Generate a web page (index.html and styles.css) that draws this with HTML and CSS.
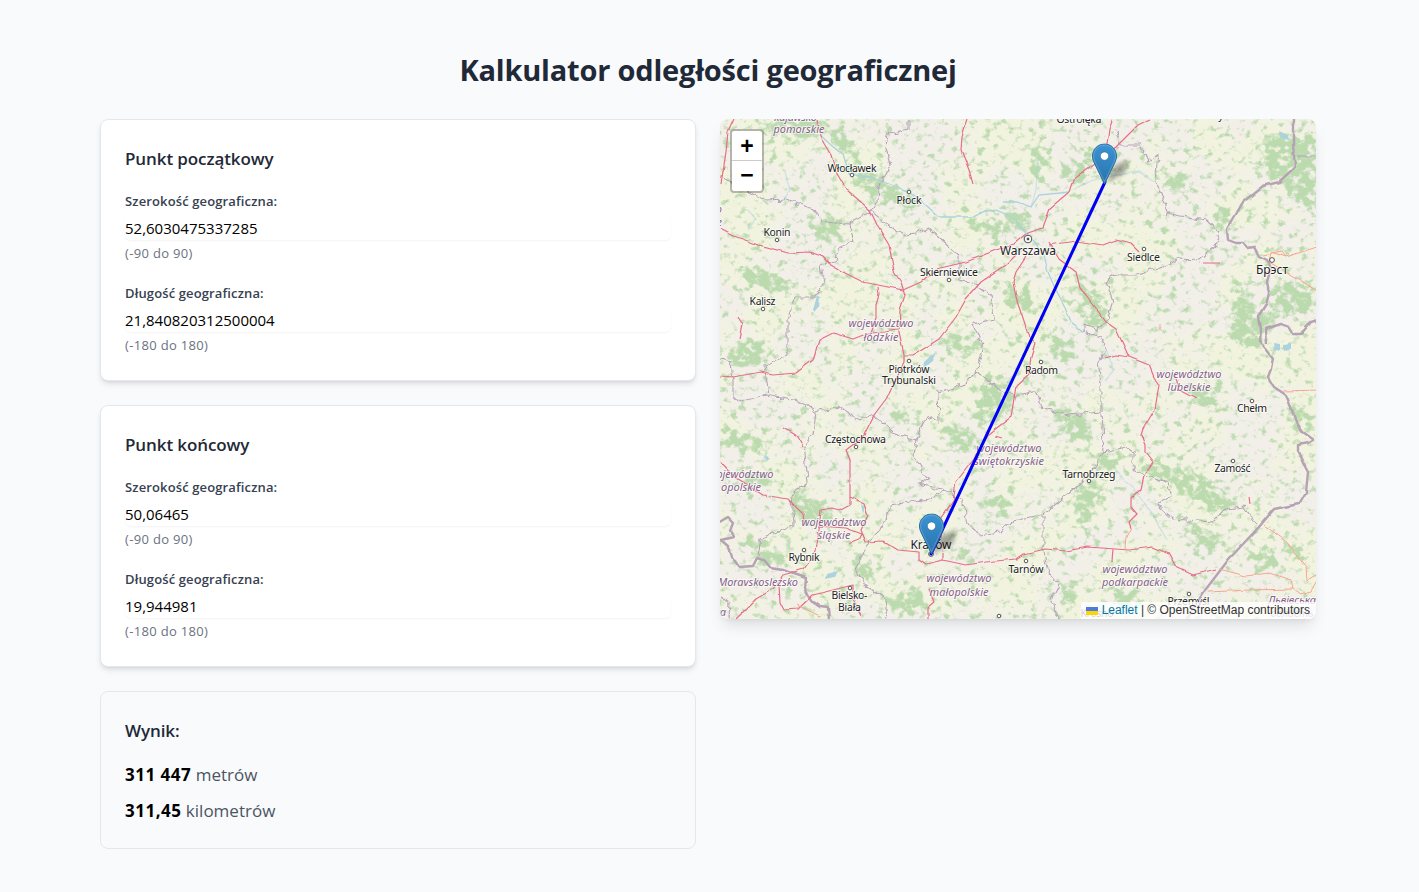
FILE: index.html
```html
<!DOCTYPE html>
<html lang="pl">
<head>
<meta charset="utf-8">
<title>Kalkulator odległości geograficznej</title>
<link rel="stylesheet" href="styles.css">
</head>
<body>
<main class="page">
  <h1 class="title"><span>Kalkulator odległości geograficznej</span></h1>
  <div class="columns">
    <div class="stack">
      <section class="card">
        <h2 class="card-title">Punkt początkowy</h2>
        <div class="field"><label class="label">Szerokość geograficzna:</label><div class="input">52,6030475337285</div><p class="hint">(-90 do 90)</p></div>
        <div class="field"><label class="label">Długość geograficzna:</label><div class="input">21,840820312500004</div><p class="hint">(-180 do 180)</p></div>
      </section>
      <section class="card">
        <h2 class="card-title">Punkt końcowy</h2>
        <div class="field"><label class="label">Szerokość geograficzna:</label><div class="input">50,06465</div><p class="hint">(-90 do 90)</p></div>
        <div class="field"><label class="label">Długość geograficzna:</label><div class="input">19,944981</div><p class="hint">(-180 do 180)</p></div>
      </section>
      <section class="card card-result">
        <h2 class="card-title">Wynik:</h2>
        <p class="result"><strong>311 447</strong> metrów</p>
        <p class="result"><strong>311,45</strong> kilometrów</p>
      </section>
    </div>
    <div class="map">
      <svg class="tiles" viewBox="720 119 596 500" width="596" height="500">
        <defs>
          <filter id="woods" filterUnits="userSpaceOnUse" x="720" y="119" width="596" height="500" color-interpolation-filters="sRGB">
            <feGaussianBlur in="SourceAlpha" stdDeviation="3.5" result="b"/>
            <feTurbulence type="fractalNoise" baseFrequency=".13 .15" numOctaves="5" seed="7"/>
            <feColorMatrix values="0 0 0 0 0  0 0 0 0 0  0 0 0 0 0  .8 .35 0 0 -.07" result="n"/>
            <feComposite in="n" in2="b" operator="arithmetic" k2="1" k3=".24"/>
            <feComponentTransfer result="m"><feFuncA type="linear" slope="5.5" intercept="-3.05"/></feComponentTransfer>
            <feFlood flood-color="#bbdaae"/>
            <feComposite in2="m" operator="in"/>
          </filter>
          <filter id="fields" filterUnits="userSpaceOnUse" x="720" y="119" width="596" height="500" color-interpolation-filters="sRGB">
            <feTurbulence type="fractalNoise" baseFrequency=".018" numOctaves="5" seed="21"/>
            <feColorMatrix values="0 0 0 0 .948  0 0 0 0 .953  0 0 0 0 .875  4 0 0 0 -1.5"/>
          </filter>
          <filter id="rough" filterUnits="userSpaceOnUse" x="700" y="100" width="640" height="540">
            <feTurbulence type="fractalNoise" baseFrequency=".13" numOctaves="2" seed="4"/>
            <feDisplacementMap in="SourceGraphic" scale="8" xChannelSelector="R" yChannelSelector="G"/>
          </filter>
          <filter id="bend" filterUnits="userSpaceOnUse" x="700" y="100" width="640" height="540">
            <feTurbulence type="fractalNoise" baseFrequency=".08" numOctaves="1" seed="9"/>
            <feDisplacementMap in="SourceGraphic" scale="4" xChannelSelector="R" yChannelSelector="G"/>
          </filter>
          <filter id="soft" x="-30%" y="-30%" width="160%" height="160%"><feGaussianBlur stdDeviation="2.2"/></filter>
          <linearGradient id="pin" x1="0" y1="0" x2="0" y2="1"><stop offset="0" stop-color="#3c93d3"/><stop offset="1" stop-color="#2873ad"/></linearGradient>
          <symbol id="marker" viewBox="0 0 25 41" width="25" height="41">
            <path d="M12.5.5C5.9.5.5 5.9.5 12.5c0 2.7.8 4.9 1.9 7.2L12.5 40.500l10.1-20.800c1.100-2.300 1.900-4.500 1.900-7.200C24.500 5.900 19.100.5 12.500.5z" fill="url(#pin)" stroke="#2a6d9f"/>
            <path d="M12.5 1.6C6.5 1.6 1.6 6.5 1.6 12.5c0 2.5.8 4.6 1.8 6.7L12.5 38l9.1-18.8c1-2.1 1.8-4.2 1.8-6.7 0-6-4.9-10.900-10.900-10.900z" fill="none" stroke="#fff" stroke-opacity=".2"/>
            <circle cx="12.5" cy="12.600" r="4.200" fill="#fff" stroke="#2d73a8" stroke-width=".7"/>
          </symbol>
        </defs>
        <rect x="720" y="119" width="596" height="500" fill="#f2efe9"/>
        <rect x="720" y="119" width="596" height="500" filter="url(#fields)"/>
        <g filter="url(#woods)">
          <path d="M1264 137L1316 132V212L1296 204 1283 182 1259 172zM1216 207h12l3 22h-18zM850 168l25 8 40 22 6 14-38-12-32-18zM828 127l18 6 14 24-14 2zM762 119h50l28 12-40 8-34-8zM962 218l50 4 4 12-40-2zM1000 205l28 8 4 18-22-6zM1062 166h26l-4 18-20-2zM1083 152l14-4-4 20-10-2zM738 265l34 8 28 14-32 4-26-10zM722 352l34-12 18 14-34 18zM722 430l48 10-8 12-40-6zM940 335l36 4 4 14-32-2zM885 405l34 10-10 8-20-6zM980 380l24-4 12 28-20 20-22-6zM938 425l32 4 14 24-28-4zM1090 450l32 6-4 18-20-6zM1136 460l36 6 34 12 34 28-22 6-32-16-44-26zM1080 486l22-6-2 24-20 26-8-24zM1178 522l28 8 26 18-30 2zM1244 546l28 8 16 20-30-6zM1278 536l30 18-4 10-20-12zM1188 385l36 5-10 18-24-6zM1237 280l16 24 24 10-18 36-30-10zM1268 282h40l8 30-40 2zM1288 400l22 14-2 18-16-6zM1072 270l30 28 8 22-22 10zM1046 330l22 10 4 22-22-6zM1046 402l40 12 8 28-30-4zM788 490l20 4 30 24-30 6-16-8zM745 470l28 6-4 12-28-4zM956 551l20-1-2 12-20-2zM880 598l40-10 8 28-34-4zM740 540l24 2 30 20-30 4zM854 552l16 12 8 20-24-10zM1120 585l26 10-16 14-20-12zM1056 582l24 6-12 18zM984 495l28 6-6 16-24-8zM808 225l30-10 6 24-24 4zM1030 135l16 20-4 34-8-10zM1160 175l24 0 10 18-20 0zM1000 285l30 6 10 24-30-6z"/>
        </g>
        <g class="water" filter="url(#bend)">
          <path d="M819 134L831 145 843 155 849 174 869 177 890 184 909 192 926 206 938 217 973 217 985 211 996 210 1003 213 1016 219 1028 235 1044 255 1048 272 1054 286 1066 309 1071 322 1084 332M1003 202L1018 202 1031 207 1039 195 1069 192"/>
          <path d="M1069 192L1093 180 1116 175 1140 172 1156 182M1031 207L1036 189 1038 159M1115 470L1135 490 1152 513 1167 540M785 172L790 190 783 202M748 210L756 219 748 230M1106 349L1114 370 1105 380" opacity=".5"/>
          <path class="lake" d="M817 296l3 1-1 10-4 5-2-2zM924 362l12-11-4 10-9 7zM1279 131l9 4 1 5-8-2zM1273 343l6 1 0 6-5 0zM1283 345l9-1 0 6-9 1zM827 574l11-3-3 6-9 2zM763 457l7 1-3 3zM861 504l4 3-2 7z"/>
        </g>
        <g class="border" filter="url(#rough)">
          <path d="M908 119V129L888 134 886 149 891 165 879 185 878 202 871 212 886 224 903 235 916 234 928 228 939 237 959 255V279L976 284 991 295 994 319 973 324 983 349 976 372 993 385 1013 397M976 372L963 385 938 392 939 422 926 415 916 440 893 432 874 415 859 420 839 407 816 412 804 402 766 395 739 402 733 395V379L731 362 720 359"/>
          <path d="M871 212L849 224 823 222 813 209 786 199 766 200 723 179M849 224L853 240 838 249 836 262 821 265 824 282 816 297 796 297 788 319V355L764 365 769 395M816 412L813 435 804 445 808 482 791 495 793 525 761 539 758 555M916 440L913 455 928 479 919 484 946 490 963 499 968 525 979 535 999 532 1016 520 1044 514 1083 482 1104 452 1101 415V382L1098 362 1106 349 1101 337 1084 332V325L1096 330 1106 322 1113 302 1106 282 1116 274H1136L1163 267 1179 259 1199 260 1216 245 1219 232 1206 220 1169 214 1156 182 1159 155 1148 162 1141 145 1121 145 1116 129"/>
          <path d="M946 490L929 499 891 505 879 532 866 545 856 569 866 585 886 599 888 619M1043 514V552L1049 575 1058 585 1051 599 1059 619M1013 397L1036 390 1043 409 1069 415 1101 412M1104 452L1126 447 1133 452V469L1144 475 1168 482 1171 495 1158 505 1173 519 1213 522 1226 509 1244 507 1256 524M1295 157H1316M720 597L730 602 729 619"/>
        </g>
        <g class="border country" filter="url(#bend)">
          <path d="M1293 119V145L1295 167 1279 182 1263 186 1243 202 1227 230 1228 240 1236 243 1243 243 1247 248 1254 247 1259 256 1267 260 1271 268 1267 282 1269 292 1266 304 1259 315 1261 330 1260 342 1267 350 1273 358 1271 369 1268 377 1274 387 1286 395 1291 407 1296 422 1303 432 1314 440 1309 443 1298 445V452L1303 463 1308 472 1306 492 1299 504 1274 509 1259 527 1229 559 1206 589 1186 619M1267 345L1266 329 1281 324 1289 327 1293 334H1301L1311 322 1320 319M716 524L728 517 733 522 730 530 733 537 721 540 729 547 732 557 739 567 753 566 757 558 766 561 771 567 783 569 794 573 806 577 805 588 811 601 820 607 828 608 829 619"/>
        </g>
        <g class="road" filter="url(#bend)">
          <path d="M734 119L728 132 726 152 721 184M818 119L820 137 831 155 836 172 846 189 870 210 878 227 889 245 894 272 901 282 905 295 900 310 899 332 904 354V362L889 395 874 415 863 437 846 450 850 460V504L839 510 832 508 821 510 819 529 816 552 804 569 783 575 773 589 756 599 736 619"/>
          <path d="M720 229L734 236 759 245 788 253 809 252 823 257 829 264 843 272 863 282 883 286 903 290 921 282 936 269 966 262 996 250 1014 244 1028 232 1042 227 1049 209 1069 192 1073 180 1094 164 1116 147 1138 125 1150 119"/>
          <path d="M878 287L879 295 876 305V319L871 332 853 339 833 333 819 340 813 360 796 373 773 375 761 372 733 377 720 376M871 332L885 331 898 329M904 355H914L939 339 956 317 966 299 981 282 1006 265 1016 255M738 317L743 325 740 339M783 428L798 437 804 447M968 119L962 137 961 150 969 170 973 184M1026 257L1016 272 1013 282 1016 297 1026 327 1031 339 1035 344 1031 357 1029 374 1016 386 1011 417 989 434 974 459 956 482 953 502 941 519V539"/>
          <path d="M1049 245L1076 241 1103 245 1116 240 1131 244 1139 252M1049 242L1059 259 1076 272 1080 288 1086 295 1106 322 1116 329 1129 357 1149 365 1154 377 1159 385 1155 409 1143 429 1141 435 1145 445V452L1153 462 1144 475 1141 489 1131 499V507L1137 514 1129 522 1131 528M1105 358L1116 355 1129 357M1176 379L1179 390 1196 399M1107 144L1109 129 1113 119M1203 263H1221M1249 496L1250 505M995 436L1002 438"/>
          <path d="M720 462L734 477 763 495 788 499 803 514 804 522M850 497L864 504 868 515 861 530 866 542 883 541 898 550 919 552V559L926 564 943 560 966 565 986 562 1016 559 1023 554 1046 549 1066 551 1088 547 1129 550 1153 547 1169 554 1176 567 1193 575 1216 569M1113 549L1112 562M943 553V560M818 526L846 528 862 534 859 540 848 544M779 585L780 602 784 610 798 609 813 595 833 590 853 585V599L861 615M929 589L934 602 928 607V619"/>
          <path class="minor" d="M1125 549L1126 537 1131 527M1219 569L1246 576 1269 573 1291 580 1293 589 1300 594 1311 591 1316 582M1264 525L1283 539 1306 567 1307 580 1316 575M1208 592L1249 590 1293 589M1263 255L1281 251 1286 257 1320 246M1269 262L1303 282 1320 293M1269 262L1271 252 1286 257M1283 391L1320 390M797 605L820 616M1160 324V331"/>
        </g>
        <g class="town">
          <circle cx="852" cy="175" r="1.8"/><circle cx="909" cy="192" r="1.8"/><circle cx="777" cy="240" r="1.8"/><circle cx="949" cy="280" r="1.8"/><circle cx="1144" cy="249" r="1.8"/><circle cx="1272" cy="260" r="2.4"/><circle cx="763" cy="309" r="1.8"/><circle cx="909" cy="361" r="1.8"/><circle cx="1041" cy="362" r="1.8"/><circle cx="1252" cy="401" r="1.8"/><circle cx="856" cy="447" r="1.8"/><circle cx="1089" cy="481" r="1.8"/><circle cx="1233" cy="461" r="1.8"/><circle cx="804" cy="550" r="1.8"/><circle cx="850" cy="588" r="1.8"/><circle cx="1026" cy="561" r="1.8"/><circle cx="999" cy="616" r="1.8"/><circle cx="1189" cy="594" r="1.8"/><circle cx="931" cy="554" r="2.4"/>
          <circle cx="1028" cy="239" r="3.8"/><circle cx="1028" cy="239" r="1" class="dot"/>
        </g>
        <g class="names">
          <text x="1079" y="123" textLength="45">Ostrołęka</text><text x="1221" y="119">y</text>
          <text x="852" y="172" textLength="49">Włocławek</text><text x="909" y="204" textLength="25">Płock</text>
          <text x="777" y="236" textLength="27">Konin</text><text x="949" y="276" textLength="58">Skierniewice</text>
          <text x="1028" y="255" textLength="56" class="big">Warszawa</text><text x="1143.500" y="261" textLength="33">Siedlce</text>
          <text x="1272" y="274" textLength="32" class="big">Брэст</text><text x="762.500" y="305" textLength="26">Kalisz</text>
          <text x="909" y="373" textLength="41">Piotrków</text><text x="909" y="384" textLength="54">Trybunalski</text>
          <text x="1041.500" y="374" textLength="33">Radom</text><text x="1252" y="412" textLength="30">Chełm</text>
          <text x="855.500" y="443" textLength="61">Częstochowa</text><text x="1089" y="478" textLength="53">Tarnobrzeg</text>
          <text x="1232.500" y="472" textLength="36">Zamość</text><text x="804" y="561" textLength="31">Rybnik</text>
          <text x="849.500" y="599" textLength="36">Bielsko-</text><text x="849.500" y="611" textLength="23">Biała</text>
          <text x="1026" y="573" textLength="35">Tarnów</text><text x="931" y="549" textLength="41" class="big">Kraków</text>
          <text x="1188.500" y="605" textLength="42">Przemyśl</text><text x="1097" y="617" textLength="33">Krosno</text>
        </g>
        <g class="names region">
          <text x="797" y="121" textLength="46">kujawsko-</text><text x="799" y="133" textLength="51">pomorskie</text>
          <text x="881" y="327" textLength="65">województwo</text><text x="881" y="341" textLength="35">łódzkie</text>
          <text x="1189" y="378" textLength="65">województwo</text><text x="1189" y="391" textLength="43">lubelskie</text>
          <text x="1009" y="452" textLength="65">województwo</text><text x="1009" y="465" textLength="70">świętokrzyskie</text>
          <text x="741" y="478" textLength="65">województwo</text><text x="741" y="491" textLength="40">opolskie</text>
          <text x="834" y="526" textLength="65">województwo</text><text x="834" y="539" textLength="33">śląskie</text>
          <text x="959" y="582" textLength="65">województwo</text><text x="959" y="596" textLength="59">małopolskie</text>
          <text x="1135" y="573" textLength="65">województwo</text><text x="1135" y="586" textLength="66">podkarpackie</text>
          <text x="758" y="586" textLength="80">Moravskoslezsko</text>
          <text x="1292" y="604" textLength="48">Львівська</text><text x="1292" y="617" textLength="43">область</text>
          <text x="716" y="213" textLength="12">go</text><text x="716" y="226" textLength="12">ie</text><text x="721" y="616" textLength="10">ra</text>
        </g>
        <path d="M1105 182L931 554" stroke="#0000f5" stroke-width="3" stroke-linecap="round"/>
        <g fill="#000" opacity=".32" filter="url(#soft)"><path d="M1106 183l9-18 14-5-4 13zM932 554l9-18 16-7-4 15z"/></g>
        <use href="#marker" x="1092" y="143.500"/><use href="#marker" x="919" y="513.500"/>
      </svg>
      <div class="zoom"><span>+</span><span>−</span></div>
      <div class="credit"><svg width="12" height="8" viewBox="0 0 12 8"><path fill="#4c7be1" d="M0 0h12v4H0z"/><path fill="#ffd500" d="M0 4h12v4H0z"/></svg><span><a>Leaflet</a> | © OpenStreetMap contributors</span></div>
    </div>
  </div>
</main>
</body>
</html>
```

FILE: styles.css
```css
* { box-sizing: border-box; }
body { margin: 0; height: 892px; overflow: hidden; background: #f9fafc; color: #000; font-family: "Open Sans", "Noto Sans", sans-serif; font-size: 16px; line-height: 24px; }
h1, h2, p { margin: 0; }
.page { width: 1216px; margin-left: 100px; padding-top: 52px; }
.title { margin-bottom: 31px; text-align: center; color: #1f2937; font-size: 29px; line-height: 36px; font-weight: 700; letter-spacing: -.2px; }
.columns { display: grid; grid-template-columns: 596px 596px; gap: 24px; align-items: start; }
.stack { display: grid; gap: 24px; }
.card { display: grid; gap: 16px; padding: 24px; background: #fff; border: 1px solid #e5e7eb; border-radius: 8px; box-shadow: 0 4px 6px -1px rgba(0,0,0,.1), 0 2px 4px -2px rgba(0,0,0,.1); }
.card-title { height: 28px; color: #1f2937; font-size: 17px; line-height: 30px; font-weight: 600; letter-spacing: -.1px; }
.field { display: grid; }
.label { height: 28px; line-height: 26px; color: #374151; font-size: 13px; font-weight: 600; letter-spacing: .13px; }
.input { height: 24px; line-height: 24px; font-size: 15px; border-radius: 6px; box-shadow: 0 1px 2px rgba(0,0,0,.05); }
.hint { margin-top: 4px; height: 20px; line-height: 18px; color: #6b7280; font-size: 13px; letter-spacing: .33px; }
.card-result { gap: 8px; background: #f9fafc; box-shadow: none; }
.card-result .card-title { margin-bottom: 8px; }
.result { height: 28px; font-size: 17px; line-height: 30px; color: #4b5563; }
.result strong { color: #000; font-weight: 700; letter-spacing: .5px; }
.map { position: relative; height: 500px; border-radius: 8px; box-shadow: 0 10px 15px -3px rgba(0,0,0,.1), 0 4px 6px -4px rgba(0,0,0,.1); overflow: hidden; }
.tiles { display: block; }
.water path { fill: none; stroke: #aad3df; stroke-width: 1.3; }
.water .lake { fill: #aad3df; stroke: none; }
.border path { fill: none; stroke: #b5a4b9; stroke-width: 1.1; }
.border.country path { stroke: #b5a2b4; stroke-width: 2.4; stroke-linejoin: round; }
.road path { fill: none; stroke: #e66e89; stroke-width: 1.2; stroke-linejoin: round; }
.road .minor { stroke: #f7a68d; stroke-width: 1; }
.town circle { fill: #fff; stroke: #444; stroke-width: .9; }
.town .dot { fill: #333; }
.names text { font-family: "Noto Sans", sans-serif; font-size: 10.5px; fill: #222; text-anchor: middle; stroke: rgba(255,255,255,.65); stroke-width: 2px; paint-order: stroke; stroke-linejoin: round; }
.names .big { font-size: 12px; }
.region text { font-size: 11px; font-style: italic; fill: #875f89; }
.zoom { position: absolute; left: 10px; top: 10px; width: 34px; border: 2px solid rgba(0,0,0,.25); border-radius: 4px; background-clip: padding-box; background-color: #fff; }
.zoom span { display: block; height: 30px; line-height: 29px; text-align: center; font-family: "Liberation Sans", Arial, sans-serif; font-size: 23px; font-weight: 700; }
.zoom span:first-child { line-height: 30px; border-bottom: 1px solid #ccc; }
.credit { position: absolute; right: 0; bottom: 0; height: 17px; padding: 0 6px 0 5px; display: flex; align-items: center; gap: 3.5px; background: rgba(255,255,255,.8); font-family: "Liberation Sans", Arial, sans-serif; font-size: 12px; line-height: 17px; letter-spacing: -.01px; color: #333; white-space: nowrap; }
.credit a { color: #0078a8; }
```
